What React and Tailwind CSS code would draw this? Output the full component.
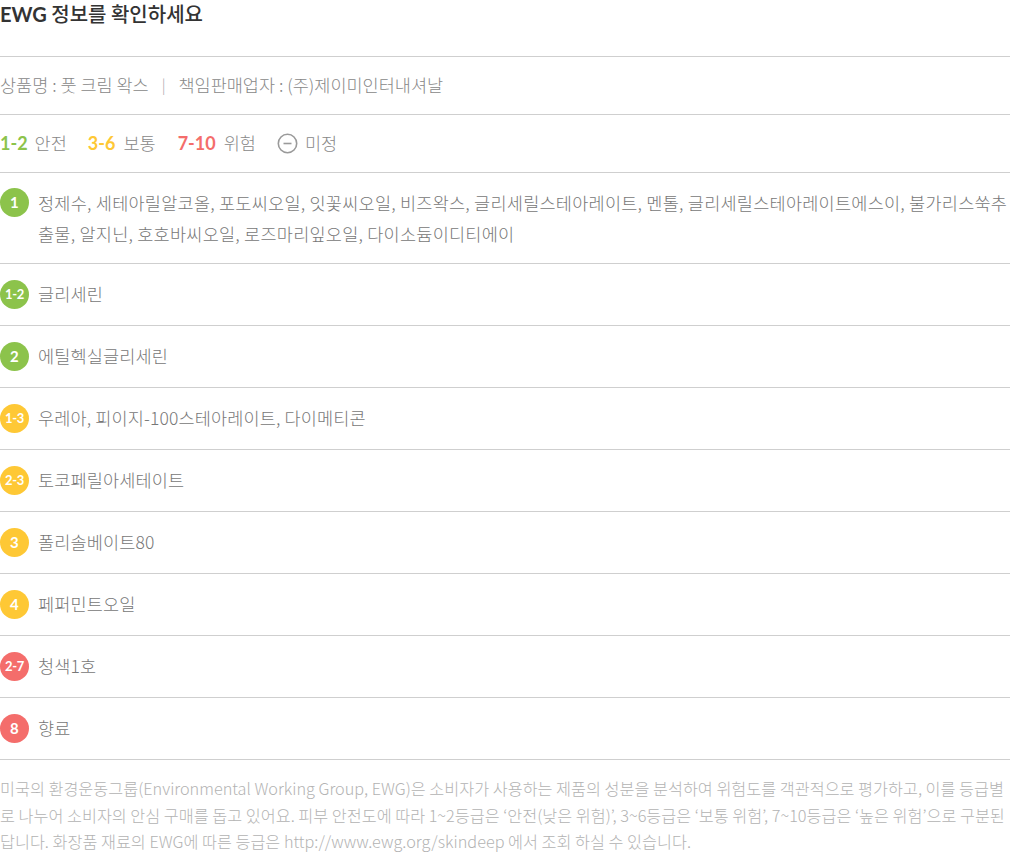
import React from "react"

const kr = { fontFamily: '"Noto Sans CJK KR", "Noto Sans", sans-serif' }
const lato = { fontFamily: 'Lato, "Noto Sans CJK KR", sans-serif' }

const GREEN = "bg-[#8cc34b]"
const YELLOW = "bg-[#fec835]"
const RED = "bg-[#f46d6b]"

const ingredients = [
  { grade: "1-2", color: GREEN, text: "글리세린" },
  { grade: "2", color: GREEN, text: "에틸헥실글리세린" },
  { grade: "1-3", color: YELLOW, text: "우레아, 피이지-100스테아레이트, 다이메티콘" },
  { grade: "2-3", color: YELLOW, text: "토코페릴아세테이트" },
  { grade: "3", color: YELLOW, text: "폴리솔베이트80" },
  { grade: "4", color: YELLOW, text: "페퍼민트오일" },
  { grade: "2-7", color: RED, text: "청색1호" },
  { grade: "8", color: RED, text: "향료" },
]

function Badge({ grade, color }) {
  const small = grade.length > 1
  return (
    <span
      style={lato}
      className={`${color} shrink-0 w-[29px] h-[29px] rounded-full flex items-center justify-center text-white font-bold ${small ? "text-[13px] tracking-[-0.3px]" : "text-[15px]"}`}
    >
      {grade}
    </span>
  )
}

export default function App() {
  return (
    <div style={kr} className="w-[1010px] bg-white text-[#777]">
      <div className="h-[57px] border-b border-[#cfcfcf]">
        <h1 className="text-[20px] leading-[28px] font-medium text-[#333]">
          <span style={lato} className="font-bold">EWG</span> 정보를 확인하세요
        </h1>
      </div>

      <div className="h-[58px] border-b border-[#cfcfcf] flex items-center text-[17.5px] font-light text-[#888]">
        <span>상품명 : 풋 크림 왁스</span>
        <span className="ml-[13px] mr-[13px] text-[#aaa] text-[15px]">|</span>
        <span>책임판매업자 : (주)제이미인터내셔날</span>
      </div>

      <div className="h-[58px] border-b border-[#cfcfcf] flex items-center text-[17.5px] font-light text-[#888]">
        <span style={lato} className="font-bold text-[#8cc34b] text-[18px]">1-2</span>
        <span className="ml-[7px]">안전</span>
        <span style={lato} className="ml-[21px] font-bold text-[#fec835] text-[18px]">3-6</span>
        <span className="ml-[8px]">보통</span>
        <span style={lato} className="ml-[22px] font-bold text-[#f46d6b] text-[18px]">7-10</span>
        <span className="ml-[8px]">위험</span>
        <svg className="ml-[21px]" width="21" height="21" viewBox="0 0 21 21">
          <circle cx="10.5" cy="10.5" r="9.2" fill="none" stroke="#9a9a9a" strokeWidth="1.6" />
          <line x1="6.5" y1="10.5" x2="14.5" y2="10.5" stroke="#9a9a9a" strokeWidth="1.6" />
        </svg>
        <span className="ml-[7px]">미정</span>
      </div>

      <div className="border-b border-[#cfcfcf] py-[14px] flex gap-[9px] text-[17.5px] leading-[31px] font-light text-[#777] tracking-[0.25px]">
        <div className="pt-[1px]">
          <Badge grade="1" color={GREEN} />
        </div>
        <p className="break-all">
          정제수, 세테아릴알코올, 포도씨오일, 잇꽃씨오일, 비즈왁스, 글리세릴스테아레이트, 멘톨, 글리세릴스테아레이트에스이, 불가리스쑥추출물, 알지닌, 호호바씨오일, 로즈마리잎오일, 다이소듐이디티에이
        </p>
      </div>

      {ingredients.map((item) => (
        <div
          key={item.text}
          className="h-[62px] border-b border-[#cfcfcf] flex items-center gap-[9px] text-[17.5px] font-light text-[#777] tracking-[0.15px]"
        >
          <Badge grade={item.grade} color={item.color} />
          <span>{item.text}</span>
        </div>
      ))}

      <p className="pt-[15px] text-[16.25px] leading-[26.5px] font-light text-[#b3b3b3] break-all">
        미국의 환경운동그룹(Environmental Working Group, EWG)은 소비자가 사용하는 제품의 성분을 분석하여 위험도를 객관적으로 평가하고, 이를 등급별로 나누어 소비자의 안심 구매를 돕고 있어요. 피부 안전도에 따라 1~2등급은 ‘안전(낮은 위험)’, 3~6등급은 ‘보통 위험’, 7~10등급은 ‘높은 위험’으로 구분된답니다. 화장품 재료의 EWG에 따른 등급은 http://www.ewg.org/skindeep 에서 조회 하실 수 있습니다.
      </p>
    </div>
  )
}
